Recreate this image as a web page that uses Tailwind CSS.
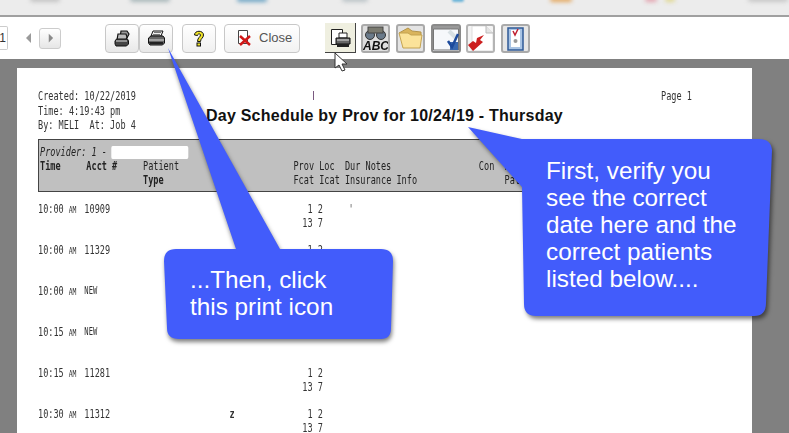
<!doctype html>
<html><head><meta charset="utf-8"><script src="https://cdn.jsdelivr.net/npm/@tailwindcss/browser@4"></script></head>
<body class="m-0">
<div class="relative w-[789px] h-[433px] overflow-hidden bg-[#808080] font-['Liberation_Sans',sans-serif]">
  <!-- blurred top strip -->
  <div class="relative h-[17px] bg-[#ececec] border-b-2 border-[#a0a0a0] overflow-hidden">
    <div class="absolute left-[30px] top-[-4px] w-[30px] h-[6px] rounded-full bg-[#c4c4c4] blur-[2px]"></div>
    <div class="absolute left-[130px] top-[-4px] w-[40px] h-[6px] rounded-full bg-[#a9b8ba] blur-[2px]"></div>
    <div class="absolute left-[237px] top-[-3px] w-[30px] h-[5px] rounded-full bg-[#6ca4c4] blur-[2px]"></div>
    <div class="absolute left-[342px] top-[-4px] w-[26px] h-[6px] rounded-full bg-[#bcc4c8] blur-[2px]"></div>
    <div class="absolute left-[452px] top-[-3px] w-[12px] h-[5px] rounded-full bg-[#6cb4d8] blur-[1px]"></div>
    <div class="absolute left-[550px] top-[-3px] w-[22px] h-[5px] rounded-full bg-[#e4a860] blur-[2px]"></div>
    <div class="absolute left-[645px] top-[-3px] w-[12px] h-[5px] rounded-full bg-[#e4a4b0] blur-[2px]"></div>
    <div class="absolute left-[665px] top-[-3px] w-[10px] h-[5px] rounded-full bg-[#e0d890] blur-[2px]"></div>
    <div class="absolute left-[748px] top-[-4px] w-[40px] h-[6px] rounded-full bg-[#c8c8c8] blur-[2px]"></div>
  </div>
  <!-- toolbar -->
  <div class="relative flex items-center h-[42px] bg-white">
    <div class="flex items-center justify-end w-[8px] h-[24px] border border-l-0 border-[#ccc] rounded-r-[2px] text-[12px] text-[#333] pr-[1px]">1</div>
    <svg class="ml-[17px] w-[8px] h-[10px]" viewBox="0 0 8 10"><path d="M6 0v10L1 5z" fill="#9a9a9a"/></svg>
    <div class="ml-[6px] flex items-center justify-center w-[22px] h-[21px] rounded-[3px] border border-[#ccc] bg-linear-to-b from-white to-[#e6e6e6]">
      <svg class="w-[7px] h-[10px]" viewBox="0 0 8 10"><path d="M2 0v10l5-5z" fill="#8a8a8a"/></svg>
    </div>
    <div class="ml-[44px] flex items-center justify-center w-[34px] h-[29px] rounded-[4px] border border-[#c8c8c8] bg-linear-to-b from-white via-[#f4f4f4] to-[#e8e8e8]">
      <svg class="w-[16px] h-[17px] blur-[0.3px]" viewBox="0 0 16 17"><path d="M7 1h6l2 3-2 4H6z" fill="#999" stroke="#111" stroke-width="1.200"/><path d="M4 4h8l1 3-1 3H3z" fill="#bbb" stroke="#111" stroke-width="1.200"/><path d="M2.500 9h11l1 2v3l-2 2H2l-1-2v-3z" fill="#444" stroke="#111"/><path d="M2 11h11" stroke="#ddd"/></svg>
    </div>
    <div class="flex items-center justify-center w-[34px] h-[29px] rounded-[4px] border border-[#c8c8c8] bg-linear-to-b from-white via-[#f4f4f4] to-[#e8e8e8]">
      <svg class="w-[17px] h-[16px] blur-[0.3px]" viewBox="0 0 17 16"><path d="M5 1h10l-2 5H3z" fill="#eee" stroke="#111"/><path d="M6 2.500h7M5 4.500h7" stroke="#777"/><path d="M3 6h12l1.500 2v5l-2 2H2l-1.500-2V8z" fill="#666" stroke="#111"/><path d="M1 10h15" stroke="#ddd"/><path d="M1 12h14v2H2z" fill="#222"/></svg>
    </div>
    <div class="ml-[9px] flex items-center justify-center w-[34px] h-[29px] rounded-[4px] border border-[#c8c8c8] bg-linear-to-b from-white to-[#f0f0f0]">
      <svg class="w-[12px] h-[17px] blur-[0.3px]" viewBox="0 0 12 17"><path d="M1.500 5c0-5 9-5 9 0 0 3-3 3.500-3 6.500H4.500c0-4 3-4.500 3-6.500 0-1.500-3-1.500-3 .5z" fill="#f0e428" stroke="#111"/><rect x="4" y="13" width="3.500" height="3" fill="#f0e428" stroke="#111"/></svg>
    </div>
    <div class="ml-[8px] flex items-center w-[76px] h-[29px] rounded-[4px] border border-[#c8c8c8] bg-linear-to-b from-white to-[#f2f2f2] pl-[12px]">
      <svg class="w-[15px] h-[16px] blur-[0.3px]" viewBox="0 0 15 16"><path d="M1.500 .5h9v13h-9z" fill="#fff" stroke="#444"/><path d="M3 6l10 9M13 6L3 15" stroke="#d01818" stroke-width="2.500"/></svg>
      <span class="ml-[7px] text-[13px] text-[#555]">Close</span>
    </div>
    <div class="ml-[25px] flex items-center justify-center w-[31px] h-[30px] bg-[#efefe0] border-r border-b border-[#444]">
      <svg class="w-[21px] h-[20px] blur-[0.3px]" viewBox="0 0 21 20"><path d="M1.500 1.500h11v15h-11z" fill="#fff" stroke="#222"/><path d="M9 5h8v5H9z" fill="#fff" stroke="#222"/><path d="M6 10h14v6H6z" fill="#666" stroke="#111"/><path d="M7 12h12" stroke="#ddd"/><path d="M7 16h12v3H7z" fill="#222"/></svg>
    </div>
    <div class="ml-[5px] flex items-center justify-center w-[29px] h-[29px] rounded-[3px] border-2 border-[#aaa] bg-[#dedede]">
      <svg class="w-[25px] h-[25px] blur-[0.3px]" viewBox="0 0 25 25"><circle cx="7" cy="9" r="4.500" fill="#6a7a8a" stroke="#333"/><circle cx="18" cy="9" r="4.500" fill="#6a7a8a" stroke="#333"/><rect x="5" y="1" width="15" height="6" fill="#7a7a70" stroke="#444"/><text x="0" y="23.500" font-size="12" font-weight="700" font-style="italic" fill="#111" font-family="Liberation Sans">ABC</text></svg>
    </div>
    <div class="ml-[6px] flex items-center justify-center w-[29px] h-[29px] rounded-[3px] border-2 border-[#aaa] bg-[#e4e4e4]">
      <svg class="w-[25px] h-[24px] blur-[0.4px]" viewBox="0 0 25 24"><path d="M1 7l9-5 4 3 9 1v4H5z" fill="#d9b45c" stroke="#b4944a"/><path d="M1 7h9l3 2 11 0-2 13H5z" fill="#fbe39a" stroke="#c4a350"/></svg>
    </div>
    <div class="ml-[6px] flex items-center justify-center w-[30px] h-[29px] rounded-[3px] border-2 border-[#8a8a8a] bg-[#f2f4f8]">
      <svg class="w-[26px] h-[25px] blur-[0.3px]" viewBox="0 0 26 25"><path d="M0 0h26v3H0z" fill="#999"/><path d="M.5 3v21h25V3z" fill="#f6f8fb" stroke="#777"/><path d="M16 5l7 7" stroke="#d8e0e4" stroke-width="4"/><path d="M17 16h8v8h-8z" fill="#3868b0"/><path d="M15 15l4 6 6-13" fill="none" stroke="#1c4a9c" stroke-width="2.500"/></svg>
    </div>
    <div class="ml-[5px] flex items-center justify-center w-[29px] h-[29px] rounded-[3px] border-2 border-[#b4b4b4] bg-[#f4f4f4]">
      <svg class="w-[25px] h-[25px] blur-[0.3px]" viewBox="0 0 25 25"><path d="M4 0h14l7 7v18H4z" fill="#fff" stroke="#ddd"/><path d="M18 0v7h7" fill="#e4e4e4" stroke="#bbb"/><path d="M0 19l5 6 10-9-3-2 4-5-7 3-1 5-3-2z" fill="#cc1f1f"/></svg>
    </div>
    <div class="ml-[6px] flex items-center justify-center w-[29px] h-[29px] rounded-[3px] border-2 border-[#aaa] bg-[#e6e6e6]">
      <svg class="w-[21px] h-[25px] blur-[0.3px]" viewBox="0 0 21 25"><path d="M3 2h15v22H3z" fill="#a9c4e4" stroke="#2f5a96" stroke-width="1.500"/><path d="M6 4h9v17H6z" fill="#fff"/><path d="M8 5l2 4 3-6" fill="none" stroke="#c02030" stroke-width="1.500"/><circle cx="10.500" cy="15" r="2" fill="#999"/></svg>
    </div>
  </div>
  <!-- report page -->
  <div class="ml-[17px] mt-[9px] w-[735px] h-[365px] bg-white pl-[21px] pr-[12px] pt-[21px] font-['DejaVu_Sans_Mono',monospace] text-[12px] leading-[14.5px] text-[#333] whitespace-nowrap">
    <div class="relative flex h-[50px]">
      <div class="w-[168px] origin-left scale-x-[.713]">
        <div>Created: 10/22/2019</div>
        <div>Time: 4:19:43 pm</div>
        <div>By: MELI&nbsp;&nbsp;At: Job 4</div>
      </div>
      <div class="w-[357px] mt-[18px] font-['Liberation_Sans',sans-serif] text-[16px] leading-[18px] font-bold tracking-[0.23px] text-[#111]">Day Schedule by Prov for 10/24/19 - Thursday</div>
      <div class="ml-[98px] origin-left scale-x-[.713]">Page 1</div>
      <span class="absolute left-[275px] top-[2px] w-px h-[9px] bg-[#7a5a80]"></span>
    </div>
    <div class="h-[53px] bg-[#c0c0c0] border border-[#444] text-[#222] pt-[5px] pl-[1px]">
      <div class="origin-left scale-x-[.713] leading-[14px]">
        <div class="flex items-center h-[14px] italic">Provider: 1 -<span class="ml-[6px] w-[108px] h-[13px] rounded-[2px] bg-white"></span></div>
        <div class="grid grid-cols-[9ch_11ch_29.200ch_5ch_5ch_4ch_22ch_5ch_auto] h-[14px]">
          <span class="font-bold">Time</span><span class="font-bold">Acct #</span><span>Patient</span><span>Prov</span><span>Loc</span><span>Dur</span><span>Notes</span><span>Con</span><span>Prov</span>
        </div>
        <div class="grid grid-cols-[20ch_29.200ch_5ch_5ch_31ch_auto] h-[14px]">
          <span></span><span class="font-bold">Type</span><span>Fcat</span><span>Icat</span><span>Insurance Info</span><span>Patient</span>
        </div>
      </div>
    </div>
    <div class="pt-[10px] origin-left scale-x-[.713] leading-[14px]">
      <div class="grid grid-cols-[9ch_42.300ch_9ch_auto] h-[41px]"><span>10:00<span class="ml-[7px] text-[9px]">AM</span></span><span>10909</span><span>&nbsp;1 2<br>13 7</span><span class="text-[#555]">'</span></div>
      <div class="grid grid-cols-[9ch_42.300ch_auto] h-[41px]"><span>10:00<span class="ml-[7px] text-[9px]">AM</span></span><span>11329</span><span>&nbsp;1 2<br>13 7</span></div>
      <div class="grid grid-cols-[9ch_42.300ch_auto] h-[41px]"><span>10:00<span class="ml-[7px] text-[9px]">AM</span></span><span class="text-[10px]">NEW</span></div>
      <div class="grid grid-cols-[9ch_42.300ch_auto] h-[41px]"><span>10:15<span class="ml-[7px] text-[9px]">AM</span></span><span class="text-[10px]">NEW</span></div>
      <div class="grid grid-cols-[9ch_42.300ch_auto] h-[41px]"><span>10:15<span class="ml-[7px] text-[9px]">AM</span></span><span>11281</span><span>&nbsp;1 2<br>13 7</span></div>
      <div class="grid grid-cols-[9ch_28.200ch_14.100ch_auto] h-[41px]"><span>10:30<span class="ml-[7px] text-[9px]">AM</span></span><span>11312</span><span class="font-bold">z</span><span>&nbsp;1 2<br>13 7</span></div>
    </div>
  </div>
  <!-- callouts -->
  <svg class="absolute left-0 top-0 w-[789px] h-[433px] pointer-events-none" viewBox="0 0 789 433">
    <path d="M468 127L522 139H759Q771 139 772 150L766 303Q766 316 754 316H536Q524 316 524 304L522 187Z" fill="#425cfb" class="drop-shadow-[2px_3px_2px_rgba(0,0,0,0.5)]"/>
    <path d="M168 48L236 249H176Q164 249 164 261L167 328Q167 339 179 339H381Q391 339 391 328L393 261Q393 249 381 249H280Z" fill="#425cfb" class="drop-shadow-[1px_3px_2px_rgba(0,0,0,0.5)]"/>
  </svg>
  <div class="absolute left-[546px] top-[157px] text-[24.300px] leading-[27px] text-white whitespace-nowrap">First, verify you<br>see the correct<br>date here and the<br>correct patients<br>listed below....</div>
  <div class="absolute left-[190px] top-[266px] text-[24.300px] leading-[27px] text-white whitespace-nowrap">...Then, click<br>this print icon</div>
  <!-- mouse pointer -->
  <svg class="absolute left-[334px] top-[52px] w-[14px] h-[20px]" viewBox="0 0 14 20"><path d="M1 1v15l4-3 3 6 3-1-3-6h5z" fill="#fff" stroke="#333"/></svg>
</div>
</body></html>
